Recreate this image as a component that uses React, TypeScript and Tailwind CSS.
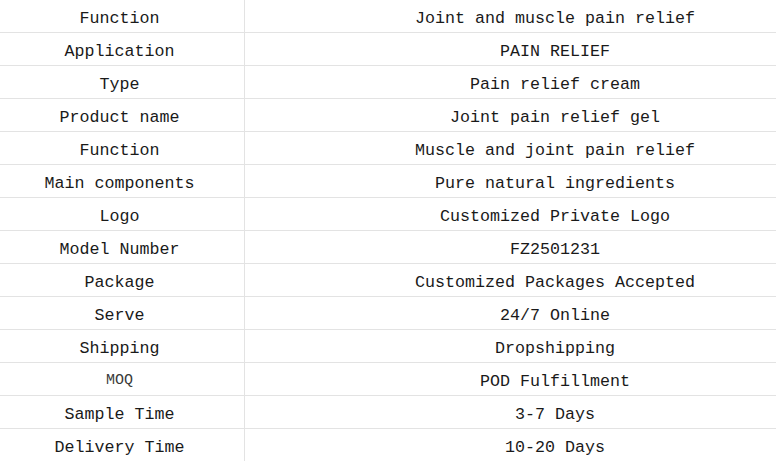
import React from "react";

const rows: [string, string][] = [
  ["Function", "Joint and muscle pain relief"],
  ["Application", "PAIN RELIEF"],
  ["Type", "Pain relief cream"],
  ["Product name", "Joint pain relief gel"],
  ["Function", "Muscle and joint pain relief"],
  ["Main components", "Pure natural ingredients"],
  ["Logo", "Customized Private Logo"],
  ["Model Number", "FZ2501231"],
  ["Package", "Customized Packages Accepted"],
  ["Serve", "24/7 Online"],
  ["Shipping", "Dropshipping"],
  ["MOQ", "POD Fulfillment"],
  ["Sample Time", "3-7 Days"],
  ["Delivery Time", "10-20 Days"],
];

export default function App() {
  return (
    <div className="w-[776px] h-[461px] overflow-hidden bg-white">
      <div
        className="ml-[-5px] w-[870px] flex flex-col text-[16.67px] text-[#1a1a1a]"
        style={{ fontFamily: '"Liberation Mono", monospace' }}
      >
        {rows.map(([k, v], i) => (
          <div key={i} className="flex h-[33px] border-b border-[#e3e3e3] pt-[4px]">
            <div className="w-[250px] border-r border-[#e3e3e3] mt-[-4px] pt-[4px] flex items-center justify-center">
              {k === "MOQ" ? (
                <span className="text-[15px] text-[#3a3a3a]">{k}</span>
              ) : (
                k
              )}
            </div>
            <div className="w-[620px] flex items-center justify-center">{v}</div>
          </div>
        ))}
      </div>
    </div>
  );
}
